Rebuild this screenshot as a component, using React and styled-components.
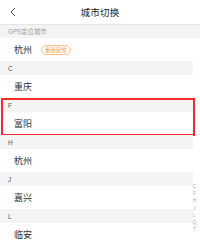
import React from 'react';
import styled, { createGlobalStyle } from 'styled-components';

const Global = createGlobalStyle`
  html, body {
    margin: 0;
    padding: 0;
    background: #fff;
    font-family: "Noto Sans CJK SC", "Noto Sans", sans-serif;
  }
  body {
    width: 200px;
    height: 240px;
    overflow: hidden;
  }
`;

const Page = styled.div`
  position: relative;
  width: 200px;
  height: 240px;
  overflow: hidden;
  background: #fff;
`;

const Header = styled.div`
  position: relative;
  height: 24px;
  display: flex;
  align-items: center;
  justify-content: center;
  border-bottom: 1px solid #e6e6e6;
`;

const Back = styled.svg`
  position: absolute;
  left: 10px;
  top: 7px;
`;

const Title = styled.div`
  font-size: 9.5px;
  color: #222;
  letter-spacing: 0.2px;
`;

const Band = styled.div`
  height: ${({ $small }) => ($small ? '13px' : '14px')};
  display: flex;
  align-items: center;
  padding-left: 8px;
  background: #f4f4f4;
  font-family: "Liberation Sans", "Noto Sans CJK SC", sans-serif;
  font-size: ${({ $small }) => ($small ? '6.3px' : '6.5px')};
  color: ${({ $small }) => ($small ? '#a0a0a0' : '#555')};
`;

const Row = styled.div`
  height: 23px;
  display: flex;
  align-items: center;
  gap: 9px;
  padding-left: 14px;
  font-size: 9px;
  color: #333;
`;

const Badge = styled.span`
  display: inline-flex;
  align-items: center;
  justify-content: center;
  height: 8px;
  padding: 0 3px;
  border: 0.8px solid #fbc58c;
  border-radius: 5px;
  font-size: 5.4px;
  color: #f5922f;
  background: #fffaf4;
`;

const List = styled.div`
  width: 193px;
`;

const Section = styled.div`
  position: relative;
  ${({ $marked }) =>
    $marked &&
    `
    &::after {
      content: '';
      position: absolute;
      top: 0;
      bottom: -1px;
      left: 1px;
      right: -2px;
      border: 2px solid #f52a2a;
      pointer-events: none;
    }
  `}
`;

const Index = styled.div`
  position: absolute;
  right: 2px;
  top: 183px;
  width: 7px;
  display: flex;
  flex-direction: column;
  align-items: center;
  font-family: "Liberation Sans", sans-serif;
  font-size: 5px;
  line-height: 7.2px;
  color: #b0b0b0;
`;

const groups = [
  { letter: 'C', cities: ['重庆'] },
  { letter: 'F', cities: ['富阳'], marked: true },
  { letter: 'H', cities: ['杭州'] },
  { letter: 'J', cities: ['嘉兴'] },
  { letter: 'L', cities: ['临安'] },
];

export default function App() {
  return (
    <Page>
      <Global />
      <Header>
        <Back width="6" height="10" viewBox="0 0 6 10">
          <path d="M5 1 L1 5 L5 9" fill="none" stroke="#555" strokeWidth="1" />
        </Back>
        <Title>城市切换</Title>
      </Header>
      <Band $small>GPS定位城市</Band>
      <Row>
        杭州
        <Badge>重新定位</Badge>
      </Row>
      <List>
        {groups.map((g) => (
          <Section key={g.letter} $marked={g.marked}>
            <Band>{g.letter}</Band>
            {g.cities.map((c) => (
              <Row key={c}>{c}</Row>
            ))}
          </Section>
        ))}
      </List>
      <Index>
        {['C', 'F', 'H', 'J', 'L', 'Q', 'T'].map((l) => (
          <span key={l}>{l}</span>
        ))}
      </Index>
    </Page>
  );
}
